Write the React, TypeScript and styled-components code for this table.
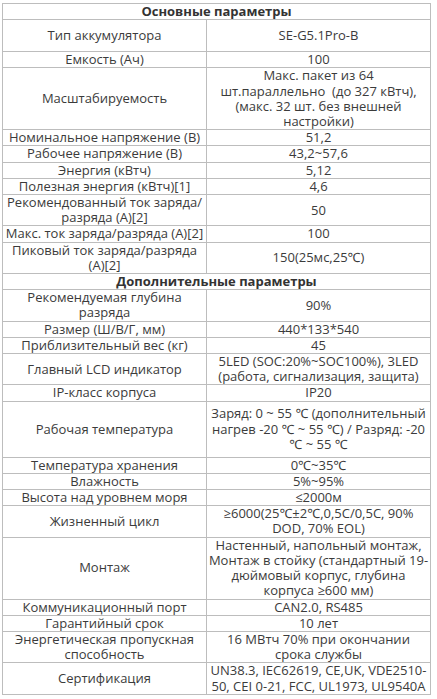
import * as React from 'react';
import styled, { createGlobalStyle } from 'styled-components';

const GlobalStyle = createGlobalStyle`
  html, body {
    margin: 0;
    padding: 0;
    background: #ffffff;
  }
`;

const Wrapper = styled.div`
  padding: 3px 0 0 2px;
  font-family: 'Open Sans', 'Noto Sans', sans-serif;
  font-size: 13px;
  line-height: 15.2px;
  color: #3b3b3b;
`;

const Table = styled.table`
  width: 429px;
  border-collapse: collapse;
  table-layout: fixed;

  td, th {
    border: 1px solid #bdbdbd;
    text-align: center;
    vertical-align: middle;
    padding: 0;
    white-space: nowrap;
  }
`;

const SectionCell = styled.th`
  font-weight: 700;
  color: #333;
`;

const Row = styled.tr<{ $height?: number }>`
  height: ${({ $height }) => ($height ? `${$height}px` : 'auto')};
`;

type Spec = {
  label: string[];
  value: string[];
  height?: number;
};

const main: Spec[] = [
  { label: ['Тип аккумулятора'], value: ['SE-G5.1Pro-B'], height: 32 },
  { label: ['Емкость (Ач)'], value: ['100'] },
  {
    label: ['Масштабируемость'],
    value: ['Макс. пакет из 64', 'шт.параллельно\u00a0 (до 327 кВтч),', '(макс. 32 шт. без внешней', 'настройки)'],
  },
  { label: ['Номинальное напряжение (В)'], value: ['51,2'] },
  { label: ['Рабочее напряжение (В)'], value: ['43,2~57,6'] },
  { label: ['Энергия (кВтч)'], value: ['5,12'] },
  { label: ['Полезная энергия (кВтч)[1]'], value: ['4,6'] },
  { label: ['Рекомендованный ток заряда/', 'разряда (А)[2]'], value: ['50'] },
  { label: ['Макс. ток заряда/разряда (А)[2]'], value: ['100'] },
  { label: ['Пиковый ток заряда/разряда', '(А)[2]'], value: ['150(25мс,25℃)'] },
];

const extra: Spec[] = [
  { label: ['Рекомендуемая глубина', 'разряда'], value: ['90%'] },
  { label: ['Размер (Ш/В/Г, мм)'], value: ['440*133*540'] },
  { label: ['Приблизительный вес (кг)'], value: ['45'] },
  { label: ['Главный LCD индикатор'], value: ['5LED (SOC:20%~SOC100%), 3LED', '(работа, сигнализация, защита)'] },
  { label: ['IP-класс корпуса'], value: ['IP20'] },
  {
    label: ['Рабочая температура'],
    value: ['Заряд: 0 ~ 55 ℃ (дополнительный', 'нагрев -20 ℃ ~ 55 ℃) / Разряд: -20', '℃ ~ 55 ℃'],
    height: 56,
  },
  { label: ['Температура хранения'], value: ['0℃~35℃'] },
  { label: ['Влажность'], value: ['5%~95%'] },
  { label: ['Высота над уровнем моря'], value: ['≤2000м'] },
  { label: ['Жизненный цикл'], value: ['≥6000(25℃±2℃,0,5C/0,5C, 90%', 'DOD, 70% EOL)'] },
  {
    label: ['Монтаж'],
    value: ['Настенный, напольный монтаж,', 'Монтаж в стойку (стандартный 19-', 'дюймовый корпус, глубина', 'корпуса ≥600 мм)'],
  },
  { label: ['Коммуникационный порт'], value: ['CAN2.0, RS485'] },
  { label: ['Гарантийный срок'], value: ['10 лет'] },
  { label: ['Энергетическая пропускная', 'способность'], value: ['16 МВтч 70% при окончании', 'срока службы'] },
  { label: ['Сертификация'], value: ['UN38.3, IEC62619, CE,UK, VDE2510-', '50, CEI 0-21, FCC, UL1973, UL9540A'] },
];

const Lines: React.FC<{ lines: string[] }> = ({ lines }) => (
  <>
    {lines.map((line, i) => (
      <React.Fragment key={i}>
        {i > 0 && <br />}
        {line}
      </React.Fragment>
    ))}
  </>
);

const renderRows = (rows: Spec[]) =>
  rows.map(row => (
    <Row key={row.label.join(' ')} $height={row.height}>
      <td><Lines lines={row.label} /></td>
      <td><Lines lines={row.value} /></td>
    </Row>
  ));

export default function App() {
  return (
    <Wrapper>
      <GlobalStyle />
      <Table>
        <colgroup>
          <col style={{ width: 204 }} />
          <col />
        </colgroup>
        <tbody>
          <tr>
            <SectionCell colSpan={2}>Основные параметры</SectionCell>
          </tr>
          {renderRows(main)}
          <tr>
            <SectionCell colSpan={2}>Дополнительные параметры</SectionCell>
          </tr>
          {renderRows(extra)}
        </tbody>
      </Table>
    </Wrapper>
  );
}
